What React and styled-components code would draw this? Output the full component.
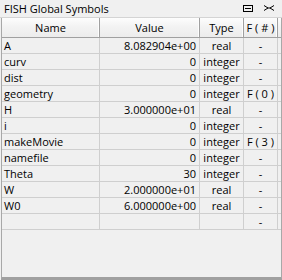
import styled, { createGlobalStyle } from "styled-components";

const GlobalStyle = createGlobalStyle`
  html, body {
    margin: 0;
    padding: 0;
    background: #f0f0f0;
  }
`;

const rows = [
  { name: "A", value: "8.082904e+00", type: "real", f: "-" },
  { name: "curv", value: "0", type: "integer", f: "-" },
  { name: "dist", value: "0", type: "integer", f: "-" },
  { name: "geometry", value: "0", type: "integer", f: "F ( 0 )" },
  { name: "H", value: "3.000000e+01", type: "real", f: "-" },
  { name: "i", value: "0", type: "integer", f: "-" },
  { name: "makeMovie", value: "0", type: "integer", f: "F ( 3 )" },
  { name: "namefile", value: "0", type: "integer", f: "-" },
  { name: "Theta", value: "30", type: "integer", f: "-" },
  { name: "W", value: "2.000000e+01", type: "real", f: "-" },
  { name: "W0", value: "6.000000e+00", type: "real", f: "-" },
  { name: "", value: "", type: "", f: "-" },
];

const Window = styled.div`
  width: 282px;
  height: 280px;
  display: flex;
  flex-direction: column;
  background: #f0f0f0;
  font-family: "Open Sans", "DejaVu Sans", sans-serif;
  font-size: 11px;
  color: #000;
  overflow: hidden;
`;

const TitleBar = styled.div`
  height: 17px;
  display: flex;
  align-items: center;
  justify-content: space-between;
  padding: 0 8px 0 4px;
  border-bottom: 1px solid #d4d4d4;
  flex-shrink: 0;
`;

const Title = styled.span`
  font-size: 11px;
`;

const TitleButtons = styled.div`
  display: flex;
  align-items: center;
  gap: 11px;
`;

const Grid = styled.div`
  flex: 1;
  margin: 0 0 0 1px;
  border-left: 1px solid #a8a8a8;
  border-right: 1px solid #a8a8a8;
  border-bottom: 3px solid #a0a0a0;
  display: flex;
  flex-direction: column;
`;

const Row = styled.div`
  display: grid;
  grid-template-columns: 98px 100px 44px 34px;
  height: ${({ $header }) => ($header ? "20px" : "16px")};
  border-bottom: 1px solid ${({ $header }) => ($header ? "#a0a0a0" : "#cfcfcf")};
  background: ${({ $header }) =>
    $header ? "linear-gradient(#fdfdfd, #f3f3f3 45%, #ececec)" : "transparent"};
  box-sizing: border-box;
`;

const Cell = styled.div`
  display: flex;
  align-items: center;
  justify-content: ${({ $align }) =>
    $align === "right" ? "flex-end" : $align === "center" ? "center" : "flex-start"};
  padding: ${({ $align }) => ($align === "right" ? "0 3px 0 0" : $align === "left" ? "0 0 0 2px" : "0")};
  border-right: 1px solid ${({ $header }) => ($header ? "#a0a0a0" : "#cfcfcf")};
  box-shadow: ${({ $header }) => ($header ? "inset -1px 0 0 #fdfdfd" : "none")};
  white-space: pre;
  overflow: hidden;
  box-sizing: border-box;
`;

const MinimizeIcon = () => (
  <svg width="10" height="7" viewBox="0 0 10 7">
    <rect x="0.5" y="0.5" width="9" height="6" fill="none" stroke="#000" />
    <line x1="2" y1="3.5" x2="8" y2="3.5" stroke="#000" />
  </svg>
);

const CloseIcon = () => (
  <svg width="10" height="7" viewBox="0 0 10 7">
    <path d="M0 0.5 L4 3 L0 5.5 M10 0.5 L6 3 L10 5.5" fill="none" stroke="#000" />
    <line x1="3.5" y1="3" x2="6.5" y2="3" stroke="#000" />
  </svg>
);

export default function App() {
  return (
    <Window>
      <GlobalStyle />
      <TitleBar>
        <Title>FISH Global Symbols</Title>
        <TitleButtons>
          <MinimizeIcon />
          <CloseIcon />
        </TitleButtons>
      </TitleBar>
      <Grid>
        <Row $header>
          <Cell $header $align="center">Name</Cell>
          <Cell $header $align="center">Value</Cell>
          <Cell $header $align="center">Type</Cell>
          <Cell $header $align="center">F ( # )</Cell>
        </Row>
        {rows.map((r, i) => (
          <Row key={i}>
            <Cell $align="left">{r.name}</Cell>
            <Cell $align="right">{r.value}</Cell>
            <Cell $align="center">{r.type}</Cell>
            <Cell $align="center">{r.f}</Cell>
          </Row>
        ))}
      </Grid>
    </Window>
  );
}
